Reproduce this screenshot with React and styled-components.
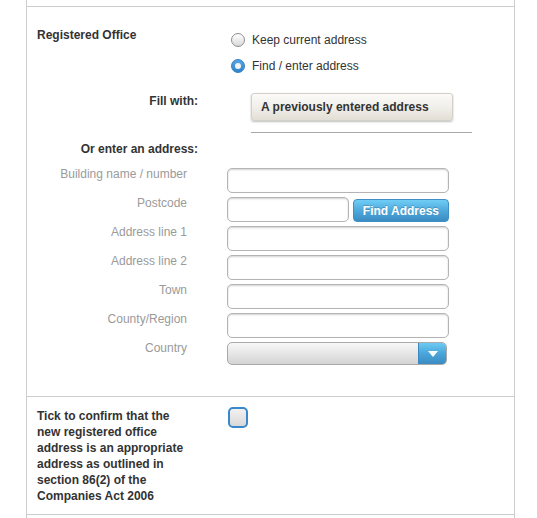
import styled, { createGlobalStyle } from "styled-components";

const fields = [
  { label: "Building name / number", kind: "text" },
  { label: "Postcode", kind: "postcode" },
  { label: "Address line 1", kind: "text" },
  { label: "Address line 2", kind: "text" },
  { label: "Town", kind: "text" },
  { label: "County/Region", kind: "text" },
  { label: "Country", kind: "select" },
];

export default function App() {
  return (
    <>
      <GlobalStyle />
      <Panel>
        <Stub $height={6} />
        <Row $pad="20px 10px 31px">
          <HeaderGrid>
            <SectionTitle>Registered Office</SectionTitle>
            <RadioList>
              <RadioItem>
                <Radio />
                Keep current address
              </RadioItem>
              <RadioItem>
                <Radio $checked />
                Find / enter address
              </RadioItem>
            </RadioList>
          </HeaderGrid>

          <FillRow>
            <BoldLabel>Fill with:</BoldLabel>
            <FillControl>
              <PrevButton type="button">A previously entered address</PrevButton>
              <Rule />
            </FillControl>
          </FillRow>

          <OrLabel>Or enter an address:</OrLabel>

          <FieldGrid>
            {fields.map((field) => (
              <Field key={field.label} field={field} />
            ))}
          </FieldGrid>
        </Row>

        <Row $pad="11px 10px 10px">
          <ConfirmGrid>
            <ConfirmText>
              Tick to confirm that the new registered office address is an
              appropriate address as outlined in section 86(2) of the Companies
              Act 2006
            </ConfirmText>
            <Checkbox />
          </ConfirmGrid>
        </Row>
        <Stub $height={4} $open />
      </Panel>
    </>
  );
}

function Field({ field }) {
  return (
    <>
      <FieldLabel>{field.label}</FieldLabel>
      {field.kind === "text" && <TextInput />}
      {field.kind === "postcode" && (
        <PostcodeWrap>
          <TextInput $width={123} />
          <FindButton type="button">Find Address</FindButton>
        </PostcodeWrap>
      )}
      {field.kind === "select" && (
        <Select>
          <SelectArrow>
            <svg width="10" height="6" viewBox="0 0 10 6">
              <path d="M0 0h10L5 6z" fill="#fff" />
            </svg>
          </SelectArrow>
        </Select>
      )}
    </>
  );
}

const GlobalStyle = createGlobalStyle`
  body {
    margin: 0;
    background: #fff;
    font-family: "Liberation Sans", Arial, sans-serif;
    font-size: 12px;
    color: #333;
  }
`;

const Panel = styled.div`
  box-sizing: border-box;
  width: 489px;
  margin-left: 26px;
  border-left: 1px solid #cdcdcd;
  border-right: 1px solid #cdcdcd;
`;

const Stub = styled.div`
  height: ${(p) => p.$height}px;
  border-bottom: ${(p) => (p.$open ? "none" : "1px solid #cdcdcd")};
`;

const Row = styled.div`
  padding: ${(p) => p.$pad};
  border-bottom: 1px solid #cdcdcd;
`;

const HeaderGrid = styled.div`
  display: grid;
  grid-template-columns: 194px 1fr;
`;

const SectionTitle = styled.div`
  font-weight: bold;
  line-height: 14px;
  margin-top: 1px;
`;

const RadioList = styled.div`
  display: flex;
  flex-direction: column;
  gap: 8px;
  padding-top: 4px;
`;

const RadioItem = styled.label`
  display: flex;
  align-items: center;
  gap: 7px;
  height: 18px;
  color: #333;
`;

const Radio = styled.span`
  box-sizing: border-box;
  width: 14px;
  height: 14px;
  border-radius: 50%;
  position: relative;
  border: 1px solid ${(p) => (p.$checked ? "#2f7fc3" : "#8e8e8e")};
  background: ${(p) =>
    p.$checked
      ? "linear-gradient(#55a6e6, #2f84cc)"
      : "linear-gradient(#ffffff, #d9d9d9)"};

  &::after {
    content: "";
    display: ${(p) => (p.$checked ? "block" : "none")};
    position: absolute;
    left: 3px;
    top: 3px;
    width: 6px;
    height: 6px;
    border-radius: 50%;
    background: #f4f4f4;
  }
`;

const FillRow = styled.div`
  display: flex;
  gap: 53px;
  margin-top: 18px;
`;

const BoldLabel = styled.div`
  width: 161px;
  flex-shrink: 0;
  text-align: right;
  font-weight: bold;
  line-height: 14px;
  padding-top: 1px;
`;

const FillControl = styled.div`
  display: flex;
  flex-direction: column;
`;

const PrevButton = styled.button`
  box-sizing: border-box;
  width: 202px;
  height: 28px;
  padding: 0 9px;
  text-align: left;
  font-family: inherit;
  font-size: 12px;
  font-weight: bold;
  color: #333;
  border: 1px solid #d3d0c8;
  border-radius: 3px;
  background: linear-gradient(#fbfaf8 0%, #f1efea 50%, #e2ded5 100%);
  box-shadow: 0 1px 2px rgba(0, 0, 0, 0.25);
`;

const Rule = styled.div`
  width: 221px;
  margin-top: 11px;
  border-top: 1px solid #a8a8a8;
`;

const OrLabel = styled(BoldLabel)`
  margin-top: 8px;
  padding-top: 1px;
`;

const FieldGrid = styled.div`
  display: grid;
  grid-template-columns: 150px 222px;
  column-gap: 40px;
  row-gap: 4px;
  margin-top: 12px;
`;

const FieldLabel = styled.div`
  text-align: right;
  color: #9a9a9a;
  line-height: 14px;
  margin-top: -1px;
`;

const TextInput = styled.div`
  box-sizing: border-box;
  width: ${(p) => (p.$width ? `${p.$width}px` : "100%")};
  height: 25px;
  border: 1px solid #b4b4b4;
  border-radius: 5px;
  background: #fff;
  box-shadow: inset 0 1px 2px rgba(0, 0, 0, 0.18);
`;

const PostcodeWrap = styled.div`
  display: flex;
  align-items: flex-end;
  gap: 4px;
`;

const FindButton = styled.button`
  box-sizing: border-box;
  width: 97px;
  height: 23px;
  padding: 0;
  font-family: inherit;
  font-size: 12px;
  font-weight: bold;
  color: #fff;
  text-shadow: 0 -1px 0 rgba(0, 0, 0, 0.2);
  border: 1px solid #3d8fc4;
  border-radius: 4px;
  background: linear-gradient(#6fcdf5 0%, #4fa9dc 50%, #3a8cc2 100%);
`;

const Select = styled.div`
  box-sizing: border-box;
  position: relative;
  width: 220px;
  height: 23px;
  border: 1px solid #a9a9a9;
  border-radius: 5px;
  background: linear-gradient(#f8f8f8, #d4d4d4);
  overflow: hidden;
  display: flex;
  justify-content: flex-end;
`;

const SelectArrow = styled.div`
  width: 27px;
  display: flex;
  align-items: center;
  justify-content: center;
  border-left: 1px solid #3a88bf;
  background: linear-gradient(#6ccbf3 0%, #4aa5da 50%, #3a8cc2 100%);
`;

const ConfirmGrid = styled.div`
  display: grid;
  grid-template-columns: 150px 1fr;
  column-gap: 41px;
`;

const ConfirmText = styled.div`
  font-weight: bold;
  line-height: 16px;
  color: #333;
`;

const Checkbox = styled.div`
  box-sizing: border-box;
  width: 20px;
  height: 21px;
  margin-top: -1px;
  border: 2px solid #3a88cc;
  border-radius: 5px;
  background: linear-gradient(#f2f2f2, #d8d8d8);
`;
